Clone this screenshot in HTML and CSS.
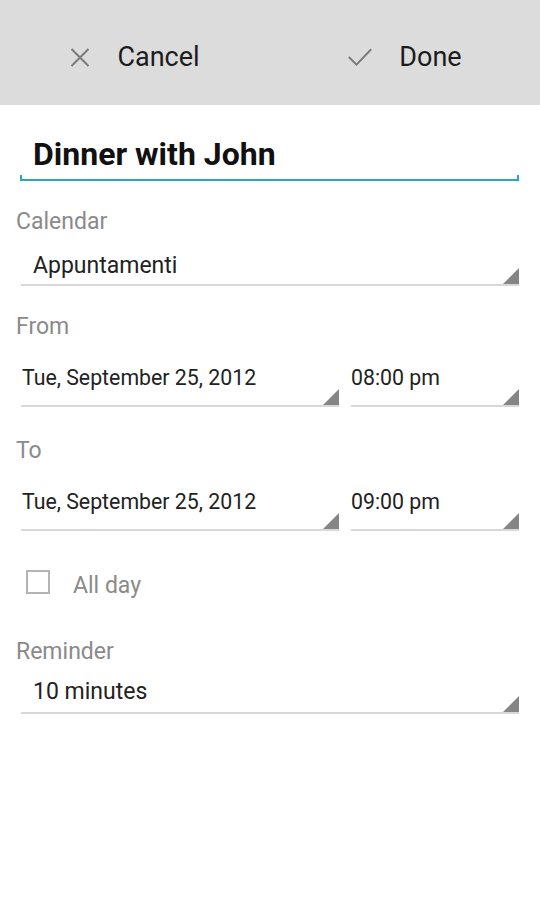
FILE: index.html
```html
<!DOCTYPE html>
<html lang="en">
<head>
  <meta charset="UTF-8" />
  <meta name="viewport" content="width=device-width, initial-scale=1.0"/>
  <title>Edit event</title>
  <link rel="stylesheet" href="styles.css">
</head>
<body>

  <header class="actionbar">
    <button type="button" class="action">
      <svg class="icon-cancel" width="20" height="19" viewBox="0 0 20 19">
        <path d="M1.5 1 L18.5 18 M18.5 1 L1.5 18" stroke="#7b7b7b" stroke-width="2" fill="none"/>
      </svg>
      <span>Cancel</span>
    </button>
    <button type="button" class="action">
      <svg class="icon-done" width="24" height="18" viewBox="0 0 24 18">
        <path d="M0.8 9 L8.5 16.6 L23.2 1.2" stroke="#7b7b7b" stroke-width="2" fill="none"/>
      </svg>
      <span>Done</span>
    </button>
  </header>

  <main class="form">
    <div class="title-field">Dinner with John</div>

    <div class="label">Calendar</div>
    <div class="spinner">Appuntamenti</div>

    <div class="label">From</div>
    <div class="date-row">
      <div class="spinner date">Tue, September 25, 2012</div>
      <div class="spinner time">08:00 pm</div>
    </div>

    <div class="label label-to">To</div>
    <div class="date-row">
      <div class="spinner date">Tue, September 25, 2012</div>
      <div class="spinner time">09:00 pm</div>
    </div>

    <label class="check-row">
      <span class="checkbox"></span>
      <span class="check-text">All day</span>
    </label>

    <div class="label label-reminder">Reminder</div>
    <div class="spinner reminder">10 minutes</div>
  </main>

</body>
</html>
```

FILE: styles.css
```css
body {
  margin: 0;
  font-family: Roboto, "Liberation Sans", sans-serif;
  background-color: #fff;
  color: #222;
}

/* top action bar */
.actionbar {
  display: flex;
  height: 105px;
  background-color: #dcdcdc;
}
.action {
  flex: 1;
  display: flex;
  align-items: center;
  justify-content: center;
  gap: 27px;
  padding: 9px 0 0 0;
  border: none;
  background: none;
  font-family: inherit;
  font-size: 27px;
  color: #1c1c1c;
}
.action svg {
  display: block;
}

/* form */
.form {
  padding: 29px 21px 0 16px;
}
.title-field {
  position: relative;
  margin-left: 4px;
  padding: 0 0 5px 13px;
  font-size: 32px;
  font-weight: bold;
  line-height: 40px;
  color: #111;
  border-bottom: 2px solid #2aa6c0;
}
.title-field::before,
.title-field::after {
  content: "";
  position: absolute;
  bottom: 0;
  width: 2px;
  height: 4px;
  background-color: #2aa6c0;
}
.title-field::before {
  left: 0;
}
.title-field::after {
  right: 0;
}

.label {
  margin-top: 27px;
  font-size: 23px;
  line-height: 28px;
  color: #8a8a8a;
}
.form > .label:first-of-type {
  margin-top: 26px;
}
.form > .label-to {
  margin-top: 30px;
}
.form > .label-reminder {
  margin-top: 36px;
}

.spinner {
  position: relative;
  margin: 15px 0 0 5px;
  padding: 0 0 3px 12px;
  font-size: 23px;
  line-height: 30px;
  color: #222;
  border-bottom: 2px solid #d8d8d8;
}
.spinner::after {
  content: "";
  position: absolute;
  right: 0;
  bottom: 0;
  border-left: 16px solid transparent;
  border-bottom: 16px solid #858585;
}
.spinner.reminder {
  margin-top: 11px;
  padding-bottom: 5px;
}

.date-row {
  display: flex;
  gap: 12px;
  margin: 23px 0 0 5px;
}
.date-row .spinner {
  margin: 0;
  padding: 0 0 13px 1px;
  font-size: 21.3px;
  line-height: 28px;
}
.date-row .date {
  width: 317px;
}
.date-row .time {
  flex: 1;
  padding-left: 0;
}

.check-row {
  display: flex;
  align-items: center;
  gap: 23px;
  height: 40px;
  margin-top: 31px;
  padding-left: 10px;
  font-size: 23px;
  color: #8a8a8a;
}
.check-text {
  padding-top: 6px;
}
.checkbox {
  width: 20px;
  height: 20px;
  border: 2px solid #b4b4b4;
}
```
